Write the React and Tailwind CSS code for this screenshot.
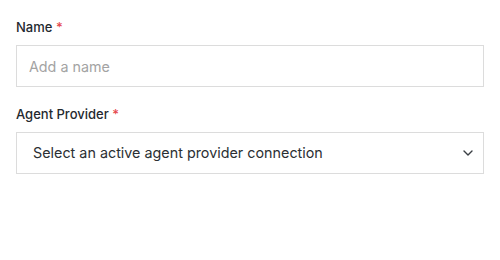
export default function App() {
    return (
        <div className="w-[500px] h-[260px] bg-white px-4 pt-[17px] font-['Inter',sans-serif]">
            <div className="flex flex-col">
                <label className="text-[13px] leading-5 font-medium text-[#24292f] mb-2">
                    Name <span className="text-[#e5484d]">*</span>
                </label>
                <input
                    type="text"
                    placeholder="Add a name"
                    className="w-[468px] h-[42px] px-3 border border-[#dcdcdc] text-[14.3px] text-[#333] placeholder:text-[#a3a3a3] outline-none"
                />
            </div>
            <div className="flex flex-col mt-[17px]">
                <label className="text-[13px] leading-5 font-medium text-[#24292f] mb-2">
                    Agent Provider <span className="text-[#e5484d]">*</span>
                </label>
                <div className="w-[468px] h-[42px] pl-4 pr-[10px] border border-[#dcdcdc] flex items-center justify-between">
                    <span className="text-[14.35px] text-[#2b2f33]">Select an active agent provider connection</span>
                    <svg width="10" height="6" viewBox="0 0 10 6" fill="none" stroke="#3a3f44" strokeWidth="1.4" strokeLinecap="round" strokeLinejoin="round">
                        <path d="M1 1l4 4 4-4" />
                    </svg>
                </div>
            </div>
        </div>
    )
}
